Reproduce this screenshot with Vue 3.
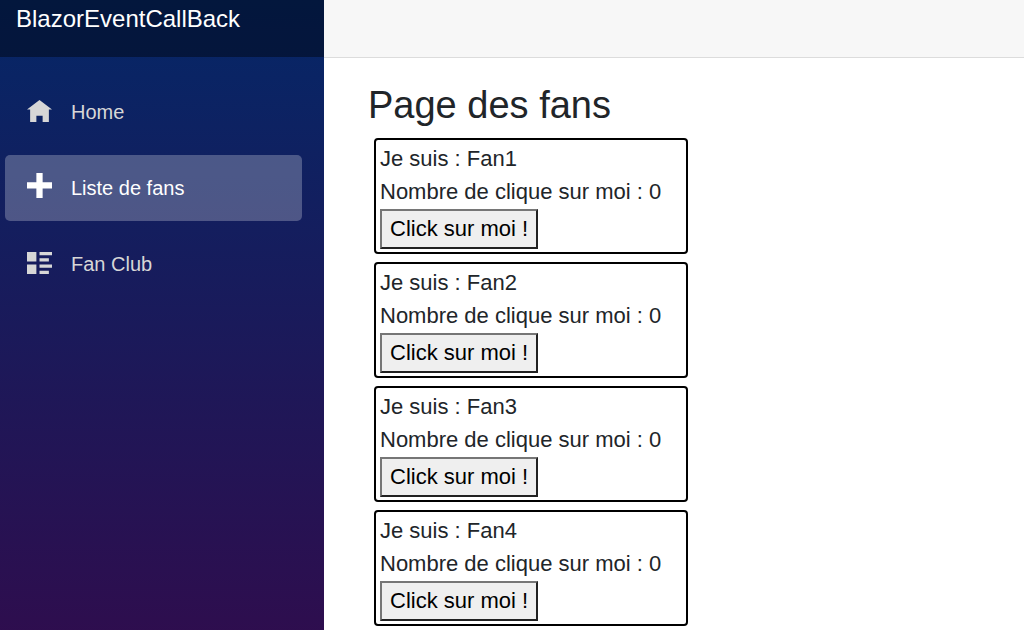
<script setup>
import { ref } from 'vue'

const links = [
  {
    label: 'Home',
    active: false,
    icon: 'M4 0l-4 3h1v4h2v-2h2v2h2v-4l1 0-4-3z'
  },
  {
    label: 'Liste de fans',
    active: true,
    icon: 'M3-1v3h-3v2h3v3h2v-3h3v-2h-3v-3h-2z'
  },
  {
    label: 'Fan Club',
    active: false,
    icon: 'M0 0v3h3v-3h-3zm4 0v1h4v-1h-4zm0 2v1h3v-1h-3zm-4 2v3h3v-3h-3zm4 0v1h4v-1h-4zm0 2v1h3v-1h-3z'
  }
]

const fans = ref([
  { name: 'Fan1', clicks: 0 },
  { name: 'Fan2', clicks: 0 },
  { name: 'Fan3', clicks: 0 },
  { name: 'Fan4', clicks: 0 }
])
</script>

<template>
  <div class="page">
    <aside class="sidebar">
      <div class="brand-row">
        <a class="brand" href="#">BlazorEventCallBack</a>
      </div>
      <nav class="nav">
        <a
          v-for="link in links"
          :key="link.label"
          href="#"
          class="nav-link"
          :class="{ active: link.active }"
        >
          <svg class="icon" viewBox="0 0 8 8" aria-hidden="true">
            <path :d="link.icon" />
          </svg>
          <span>{{ link.label }}</span>
        </a>
      </nav>
    </aside>

    <main class="main">
      <div class="top-row"></div>
      <section class="content">
        <h1>Page des fans</h1>
        <div class="fans">
          <article v-for="fan in fans" :key="fan.name" class="fan">
            <div>Je suis : {{ fan.name }}</div>
            <div>Nombre de clique sur moi : {{ fan.clicks }}</div>
            <button type="button" @click="fan.clicks++">Click sur moi !</button>
          </article>
        </div>
      </section>
    </main>
  </div>
</template>

<style>
body {
  margin: 0;
  background: #fff;
}
</style>

<style scoped>
.page {
  display: flex;
  min-height: 100vh;
  box-sizing: border-box;
  font-family: "Liberation Sans", Arial, sans-serif;
  font-size: 22px;
  line-height: 33px;
  color: #212529;
}

.sidebar {
  flex: 0 0 324px;
  background: linear-gradient(180deg, #052767 0, #3a0647 130vh);
}

.brand-row {
  height: 57px;
  box-sizing: border-box;
  padding: 2px 16px;
  background: rgba(0, 0, 0, 0.4);
}

.brand {
  color: #fff;
  font-size: 24px;
  line-height: 34px;
  text-decoration: none;
}

.nav {
  display: flex;
  flex-direction: column;
  gap: 10px;
  padding: 22px 22px 0 5px;
}

.nav-link {
  display: flex;
  align-items: center;
  gap: 19px;
  height: 66px;
  padding: 0 22px;
  border-radius: 5px;
  color: #d7d7d7;
  font-size: 20px;
  text-decoration: none;
}

.nav-link.active {
  background: rgba(255, 255, 255, 0.25);
  color: #fff;
}

.icon {
  width: 25px;
  height: 25px;
  fill: currentColor;
  overflow: visible;
}

.main {
  flex: 1;
  min-width: 0;
}

.top-row {
  height: 58px;
  box-sizing: border-box;
  margin-bottom: 24px;
  background: #f7f7f7;
  border-bottom: 1px solid #dcdcdc;
}

.content {
  padding: 0 44px 4px;
}

h1 {
  margin: 0 0 10px;
  font-size: 38px;
  font-weight: 400;
  line-height: 46px;
}

.fans {
  display: flex;
  flex-direction: column;
  align-items: flex-start;
  gap: 8px;
  padding-left: 6px;
}

.fan {
  width: 314px;
  box-sizing: border-box;
  padding: 2px 4px 3px;
  border: 2px solid #000;
  border-radius: 4px;
}

button {
  display: block;
  height: 40px;
  margin: 1px 0 0;
  padding: 0 8px;
  border: 2px solid;
  border-color: #767676 #212121 #212121 #767676;
  border-radius: 0;
  background: #efefef;
  color: #000;
  font-family: inherit;
  font-size: 22px;
}
</style>
